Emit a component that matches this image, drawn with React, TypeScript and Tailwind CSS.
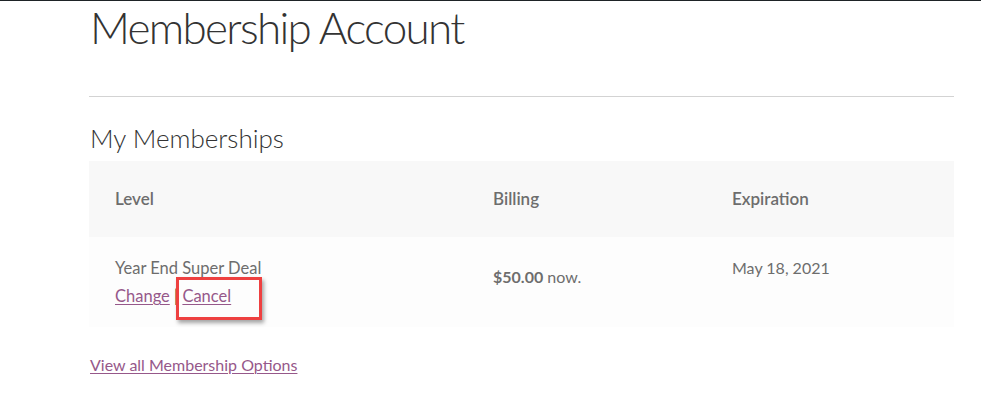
export default function App() {
  const link = "text-[#96588a] underline underline-offset-2 decoration-1";
  return (
    <div className="min-h-[400px] bg-white border-t border-[#1e2326] font-['Lato',sans-serif] text-[#6d6d6d]">
      <div className="ml-[89px] w-[865px]">
        <h1 className="pl-px text-[44px] leading-[52px] font-light text-[#333333] tracking-[-1.7px]">
          Membership Account
        </h1>
        <hr className="mt-[43px] border-0 border-t border-[#d3d3d3]" />
        <h2 className="mt-[24px] pl-px text-[26px] leading-[34px] font-light text-[#333333]">My Memberships</h2>
        <table className="mt-[6px] w-full table-fixed border-collapse text-[16px]">
          <thead>
            <tr className="bg-[#f8f8f8] h-[76px] text-[17px]">
              <th className="w-[378px] text-left pl-[26px] font-semibold">Level</th>
              <th className="w-[239px] text-left pl-[26px] font-semibold">Billing</th>
              <th className="text-left pl-[26px] font-semibold">Expiration</th>
            </tr>
          </thead>
          <tbody>
            <tr className="bg-[#fdfdfd] h-[90px]">
              <td className="pl-[26px] align-top pt-[17px] leading-[28px] text-[16.5px]">
                <div>Year End Super Deal</div>
                <div className="relative">
                  <a href="#" className={link}>Change</a>
                  <span className="text-[#333333]"> | </span>
                  <a href="#" className={link}>Cancel</a>
                  <span className="absolute left-[61px] top-[-5px] w-[86px] h-[43px] border-[3px] border-[#ee4040] shadow-[2px_3px_4px_rgba(0,0,0,0.35)]" />
                </div>
              </td>
              <td className="pl-[26px] align-top pt-[26px] leading-[28px]">
                <span className="font-bold">$50.00</span> now.
              </td>
              <td className="pl-[26px] align-top pt-[17px] leading-[28px]">May 18, 2021</td>
            </tr>
          </tbody>
        </table>
        <div className="mt-[26px] pl-px text-[16px]">
          <a href="#" className={link}>View all Membership Options</a>
        </div>
      </div>
    </div>
  );
}
